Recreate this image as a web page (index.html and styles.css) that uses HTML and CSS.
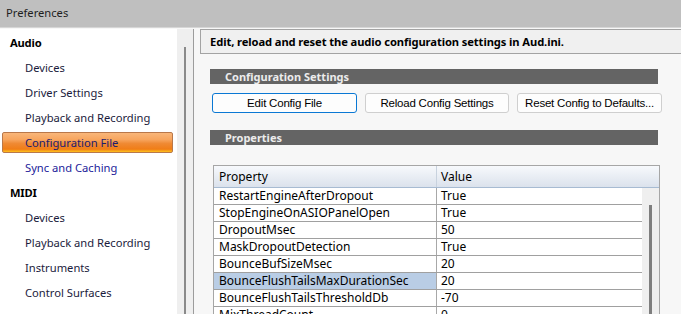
FILE: index.html
```html
<!DOCTYPE html>
<html lang="en">
<head>
	<meta charset="UTF-8" />
	<title>Preferences</title>
	<link rel="stylesheet" href="styles.css">
</head>
<body>
	<div class="window">
		<div class="titlebar">Preferences</div>
		<div class="content">
			<div class="sidebar">
				<ul class="nav">
					<li class="group">Audio</li>
					<li>Devices</li>
					<li>Driver Settings</li>
					<li>Playback and Recording</li>
					<li class="active"><span>Configuration File</span></li>
					<li class="hover">Sync and Caching</li>
					<li class="group">MIDI</li>
					<li>Devices</li>
					<li>Playback and Recording</li>
					<li>Instruments</li>
					<li>Control Surfaces</li>
				</ul>
				<div class="track"><div class="thumb"></div></div>
			</div>
			<div class="main">
				<div class="header">Edit, reload and reset the audio configuration settings in Aud.ini.</div>
				<div class="section">Configuration Settings</div>
				<div class="buttons">
					<button class="btn focus">Edit Config File</button>
					<button class="btn">Reload Config Settings</button>
					<button class="btn">Reset Config to Defaults...</button>
				</div>
				<div class="section props-title">Properties</div>
				<div class="grid">
					<div class="grid-head">
						<div class="col-prop">Property</div>
						<div class="col-val">Value</div>
					</div>
					<div class="grid-body">
						<div class="rows">
							<div class="row"><div class="col-prop">RestartEngineAfterDropout</div><div class="col-val">True</div></div>
							<div class="row"><div class="col-prop">StopEngineOnASIOPanelOpen</div><div class="col-val">True</div></div>
							<div class="row"><div class="col-prop">DropoutMsec</div><div class="col-val">50</div></div>
							<div class="row"><div class="col-prop">MaskDropoutDetection</div><div class="col-val">True</div></div>
							<div class="row"><div class="col-prop">BounceBufSizeMsec</div><div class="col-val">20</div></div>
							<div class="row selected"><div class="col-prop">BounceFlushTailsMaxDurationSec</div><div class="col-val">20</div></div>
							<div class="row"><div class="col-prop">BounceFlushTailsThresholdDb</div><div class="col-val">-70</div></div>
							<div class="row"><div class="col-prop">MixThreadCount</div><div class="col-val">0</div></div>
						</div>
						<div class="track grid-track"><div class="thumb"></div></div>
					</div>
				</div>
			</div>
		</div>
	</div>
</body>
</html>
```

FILE: styles.css
```css
body {
	margin: 0;
	width: 681px;
	height: 314px;
	overflow: hidden;
	font-family: "Noto Sans", "Open Sans", sans-serif;
	font-size: 12px;
	color: #000;
	background: #f7f7f7;
}

.window {
	height: 314px;
	display: flex;
	flex-direction: column;
}

.titlebar {
	height: 27px;
	line-height: 25px;
	padding-left: 6px;
	background: #bfbfbf;
	border-bottom: 1px solid #d6d6d6;
	color: #1e1e1e;
	font-size: 11.2px;
	flex: none;
}

.content {
	flex: 1;
	display: flex;
	padding-top: 1px;
	min-height: 0;
}

/* left tree */
.sidebar {
	width: 193px;
	display: flex;
	background: #fff;
	border-right: 1px solid #9c9c9c;
	flex: none;
}

.nav {
	list-style: none;
	margin: 0;
	padding: 1px 0 0 0;
	width: 177px;
	font-size: 11.2px;
}

.nav li {
	height: 25px;
	line-height: 25px;
	padding-left: 25px;
	color: #1b1b3c;
	white-space: nowrap;
}

.nav li.group {
	padding-left: 10px;
	font-weight: bold;
	color: #000;
	letter-spacing: -0.2px;
}

.nav li.hover {
	color: #22229a;
}

.nav li.active {
	box-sizing: border-box;
	padding: 2px 4px 2px 2px;
}

.nav li.active span {
	display: block;
	height: 19px;
	line-height: 20px;
	padding-left: 22px;
	border: 1px solid #b9784a;
	border-radius: 2px;
	color: #1c1c70;
	background: linear-gradient(#f9b67a 0%, #f7a55e 35%, #ef8a34 55%, #f07d17 85%, #ffc21c 100%);
}

.track {
	width: 16px;
	background: #efefef;
	position: relative;
	flex: none;
}

.thumb {
	position: absolute;
	left: 7px;
	top: 18px;
	bottom: 0;
	width: 2px;
	background: #8a8a8a;
}

/* right panel */
.main {
	flex: 1;
	padding-left: 6px;
	min-width: 0;
}

.header {
	height: 23px;
	line-height: 23px;
	padding-left: 9px;
	margin-right: -10px;
	border: 1px solid #a3a3a3;
	background: #f0f0f0;
	font-weight: bold;
	font-size: 11.2px;
	letter-spacing: -0.1px;
	white-space: nowrap;
}

.section {
	margin: 15px 0 0 10px;
	width: 433px;
	height: 15px;
	line-height: 15px;
	padding-left: 15px;
	background: #646464;
	color: #ececec;
	font-weight: bold;
	font-size: 11px;
}

.buttons {
	display: flex;
	gap: 8px;
	margin: 9px 0 0 12px;
}

.btn {
	width: 145px;
	height: 20px;
	padding: 0;
	font-family: "Liberation Sans", Arial, sans-serif;
	font-size: 11.5px;
	letter-spacing: -0.2px;
	color: #000;
	background: #fdfdfd;
	border: 1px solid #cfcfcf;
	border-radius: 3px;
	white-space: nowrap;
}

.btn:nth-child(2) {
	width: 144px;
}

.btn.focus {
	border-color: #0a78d4;
}

.props-title {
	margin-top: 17px;
}

.grid {
	margin: 20px 0 0 13px;
	width: 445px;
	border: 1px solid #a6a6a6;
	border-bottom: none;
	background: #fff;
}

.grid-head {
	display: flex;
	height: 21px;
	line-height: 21px;
	background: linear-gradient(#f7f9fc, #dbe2ec);
	border-bottom: 1px solid #a7bbd2;
}

.col-prop {
	width: 217px;
	padding-left: 5px;
	border-right: 1px solid #a8a8a8;
	white-space: nowrap;
	overflow: hidden;
}

.col-val {
	flex: 1;
	padding-left: 4px;
}

.grid-head .col-prop {
	border-right-color: #c8d2de;
}

.grid-body {
	display: flex;
	height: 126px;
	overflow: hidden;
}

.rows {
	width: 428px;
}

.row {
	display: flex;
	height: 16px;
	line-height: 16px;
	border-bottom: 1px solid #a0a0a0;
}

.row.selected .col-prop {
	background: #b9cde5;
}

.grid-track {
	width: 17px;
}

.grid-track .thumb {
	left: 7px;
	top: 17px;
	width: 3px;
	background: #7e7e7e;
}
```
